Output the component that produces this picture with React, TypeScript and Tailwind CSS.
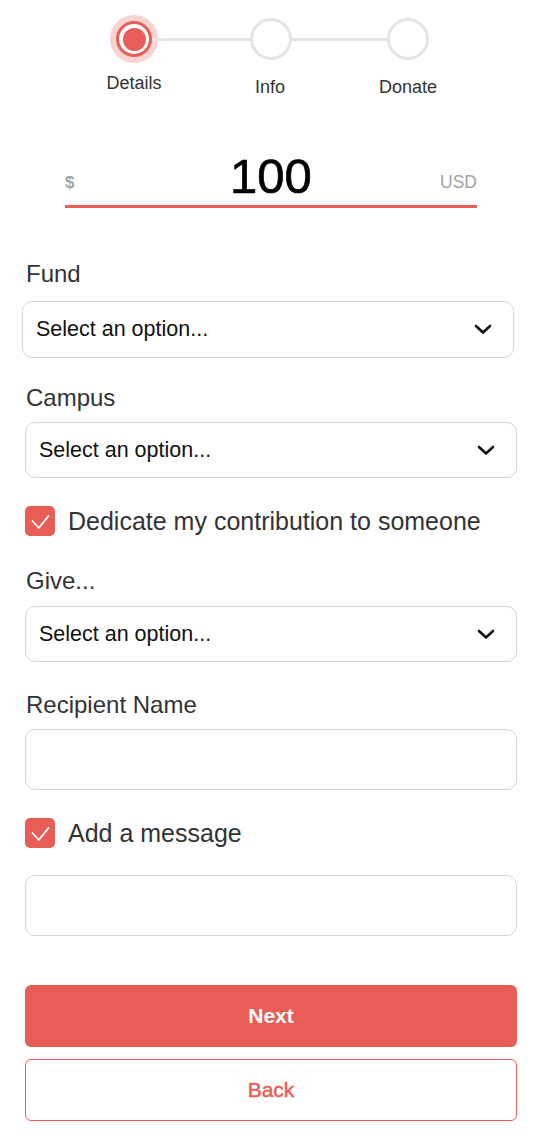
import React from "react";

const RED = "#e85e57";

function Chevron() {
  return (
    <svg width="18" height="11" viewBox="0 0 18 11" fill="none">
      <path d="M2 2 L9 8.5 L16 2" stroke="#111" strokeWidth="2.6" strokeLinecap="round" strokeLinejoin="round" />
    </svg>
  );
}

function Check() {
  return (
    <div className="flex h-[30px] w-[30px] shrink-0 items-center justify-center rounded-[5px] bg-[#e85e57]">
      <svg width="30" height="30" viewBox="0 0 30 30" fill="none">
        <path d="M7.5 15 L13.8 22 L23.5 10" stroke="#fff" strokeWidth="1.8" strokeLinecap="round" strokeLinejoin="round" />
      </svg>
    </div>
  );
}

function Select({ className = "" }: { className?: string }) {
  return (
    <div
      className={
        "flex items-center justify-between rounded-[10px] border border-[#d6d6d6] bg-white pl-[13px] pr-[21px] " +
        className
      }
    >
      <span className="text-[21.5px] text-[#111]">Select an option...</span>
      <Chevron />
    </div>
  );
}

function Label({ children, className = "" }: { children: React.ReactNode; className?: string }) {
  return <div className={"text-[24px] leading-[29px] text-[#333] pl-px " + className}>{children}</div>;
}

export default function App() {
  return (
    <div className="min-h-[1140px] bg-white px-[25px] pt-[15px] pb-5 font-['Liberation_Sans',Arial,sans-serif]">
      {/* stepper */}
      <div className="flex items-center pl-[85px]">
        <div className="flex h-[48px] w-[48px] shrink-0 items-center justify-center rounded-full bg-[#f9d3d1]">
          <div className="flex h-[36px] w-[36px] items-center justify-center rounded-full border-[3px] border-[#e85e57] bg-white">
            <div className="h-[23px] w-[23px] rounded-full bg-[#e85e57]" />
          </div>
        </div>
        <div className="-ml-[6px] h-[3px] w-[98px] bg-[#e4e4e4]" />
        <div className="h-[42px] w-[42px] shrink-0 rounded-full border-[3px] border-[#e4e4e4]" />
        <div className="h-[3px] w-[95px] bg-[#e4e4e4]" />
        <div className="h-[42px] w-[42px] shrink-0 rounded-full border-[3px] border-[#e4e4e4]" />
      </div>
      <div className="mt-[9px] flex items-start pl-[59px] text-[18px] leading-[22px] text-[#333]">
        <div className="w-[100px] text-center">Details</div>
        <div className="ml-[36px] mt-[4px] w-[100px] text-center">Info</div>
        <div className="ml-[38px] mt-[4px] w-[100px] text-center">Donate</div>
      </div>

      {/* amount */}
      <div className="mx-[40px] mt-[54px]">
        <div className="grid grid-cols-[1fr_auto_1fr] items-end">
          <span className="pb-[9px] text-[17px] leading-[17px] font-semibold text-[#a3a3a3]">$</span>
          <span className="text-[49px] leading-[48px] text-black [-webkit-text-stroke:0.7px_black]">100</span>
          <span className="pb-[9px] text-right text-[17.5px] leading-[17px] text-[#a3a3a3]">USD</span>
        </div>
        <div className="mt-[5px] h-[3px]" style={{ backgroundColor: RED }} />
      </div>

      <Label className="mt-[51px]">Fund</Label>
      <Select className="mt-[13px] -ml-[3px] mr-[3px] h-[57px]" />

      <Label className="mt-[25px]">Campus</Label>
      <Select className="mt-[10px] h-[56px]" />

      <div className="mt-[28px] flex items-center gap-[13px]">
        <Check />
        <span className="text-[25px] leading-[29px] text-[#333]">Dedicate my contribution to someone</span>
      </div>

      <Label className="mt-[30px]">Give...</Label>
      <Select className="mt-[11px] h-[56px]" />

      <Label className="mt-[28px]">Recipient Name</Label>
      <div className="mt-[10px] h-[61px] rounded-[10px] border border-[#d6d6d6] bg-white" />

      <div className="mt-[28px] flex items-center gap-[13px]">
        <Check />
        <span className="text-[25px] leading-[29px] text-[#333]">Add a message</span>
      </div>
      <div className="mt-[27px] h-[61px] rounded-[10px] border border-[#d6d6d6] bg-white" />

      <button className="mt-[49px] flex h-[62px] w-full items-center justify-center rounded-[6px] bg-[#e85e57] text-[21px] font-bold text-white">
        Next
      </button>
      <button className="mt-[12px] flex h-[62px] w-full items-center justify-center rounded-[6px] border-[1.5px] border-[#e85e57] bg-white text-[21px] text-[#e85e57] [-webkit-text-stroke:0.5px_#e85e57]">
        Back
      </button>
    </div>
  );
}
